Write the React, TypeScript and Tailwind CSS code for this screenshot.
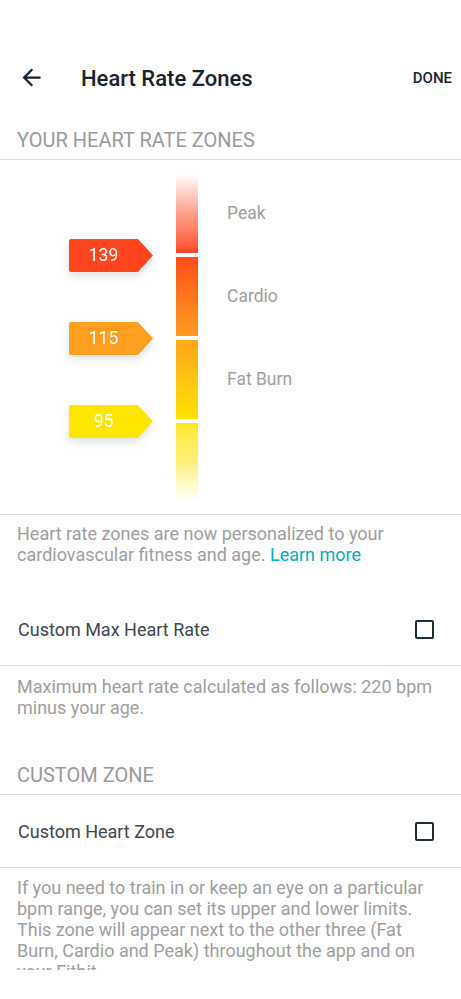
import React from 'react';

const zones = [
  { label: 'Peak', bar: 'bg-gradient-to-b from-[#ffffff] via-[#ffa08a] to-[#ff4520]' },
  { label: 'Cardio', bar: 'bg-gradient-to-b from-[#ff4a1a] to-[#ff9a1f]' },
  { label: 'Fat Burn', bar: 'bg-gradient-to-b from-[#ffa51a] to-[#ffe300]' },
  { label: '', bar: 'bg-gradient-to-b from-[#ffe81a] via-[#fff07a] to-[#ffffff]' },
];

const tags = [
  { value: 139, color: 'bg-[#ff461f]' },
  { value: 115, color: 'bg-[#ff9e1f]' },
  { value: 95, color: 'bg-[#ffe600]' },
];

const Divider = () => <div className="h-px bg-[#dedede]" />;

const Checkbox = () => (
  <div className="w-[19px] h-[19px] rounded-[2px] border-2 border-[#1d2d3a]" />
);

const ZoneTag = ({ value, color }: { value: number; color: string }) => (
  <div className="drop-shadow-[0_4px_4px_rgba(0,0,0,0.12)]">
    <div
      className={`${color} w-[84px] h-[33px] rounded-l-[2px] [clip-path:polygon(0_0,82%_0,100%_50%,82%_100%,0_100%)] flex items-center`}
    >
      <span className="w-[69px] text-center text-white text-[17.5px]">{value}</span>
    </div>
  </div>
);

const App: React.FC = () => {
  return (
    <div className="w-[461px] h-[999px] bg-white overflow-hidden font-['Roboto',sans-serif]">
      <div className="h-[970px] overflow-hidden">
        {/* status bar space */}
        <div className="h-[40px]" />

        {/* toolbar */}
        <div className="h-[76px] flex items-center">
          <svg width="27" height="27" viewBox="0 0 24 24" className="ml-[18px] mb-[2px]" fill="#16222e">
            <path d="M20 11H7.83l5.59-5.59L12 4l-8 8 8 8 1.41-1.41L7.83 13H20v-2z" />
          </svg>
          <h1 className="ml-[36px] text-[22px] font-medium text-[#16222e]">Heart Rate Zones</h1>
          <span className="ml-auto mr-[9px] text-[15px] font-medium text-[#16222e]">DONE</span>
        </div>

        {/* section header */}
        <div className="pt-[12px] pb-[6px] px-[17px] text-[20px] leading-[25px] text-[#9a9a9a]">
          YOUR HEART RATE ZONES
        </div>
        <Divider />

        {/* zone chart */}
        <div className="h-[354px] flex pt-[14px]">
          <div className="ml-[69px] w-[84px] pt-[65px] flex flex-col gap-[50px]">
            {tags.map(t => (
              <ZoneTag key={t.value} value={t.value} color={t.color} />
            ))}
          </div>
          <div className="ml-[23px] w-[22px] flex flex-col gap-[4px]">
            {zones.map((z, i) => (
              <div key={i} className={`h-[79px] ${z.bar}`} />
            ))}
          </div>
          <div className="ml-[29px] flex flex-col gap-[4px]">
            {zones.map((z, i) => (
              <div key={i} className="h-[79px] flex items-center text-[17.5px] text-[#9e9e9e]">
                {z.label}
              </div>
            ))}
          </div>
        </div>
        <Divider />

        <p className="pt-[8px] pb-[28px] px-[17px] text-[18px] leading-[21px] text-[#9e9e9e]">
          Heart rate zones are now personalized to your cardiovascular fitness and age.{' '}
          <span className="text-[#00afb8]">Learn more</span>
        </p>

        <div className="h-[72px] flex items-center justify-between pl-[18px] pr-[27px]">
          <span className="text-[18px] text-[#3c474e]">Custom Max Heart Rate</span>
          <Checkbox />
        </div>
        <Divider />

        <p className="pt-[10px] px-[17px] text-[18px] leading-[21px] text-[#9e9e9e]">
          Maximum heart rate calculated as follows: 220 bpm minus your age.
        </p>

        <div className="pt-[45px] pb-[6px] px-[17px] text-[20px] leading-[25px] text-[#9a9a9a]">
          CUSTOM ZONE
        </div>
        <Divider />

        <div className="h-[72px] flex items-center justify-between pl-[18px] pr-[27px]">
          <span className="text-[18px] text-[#3c474e]">Custom Heart Zone</span>
          <Checkbox />
        </div>
        <Divider />

        <p className="pt-[9px] pl-[17px] pr-[20px] text-[18px] leading-[21px] text-[#9e9e9e]">
          If you need to train in or keep an eye on a particular bpm range, you can set its upper and
          lower limits. This zone will appear next to the other three (Fat Burn, Cardio and Peak)
          throughout the app and on your Fitbit.
        </p>
      </div>
    </div>
  );
};

export default App;
